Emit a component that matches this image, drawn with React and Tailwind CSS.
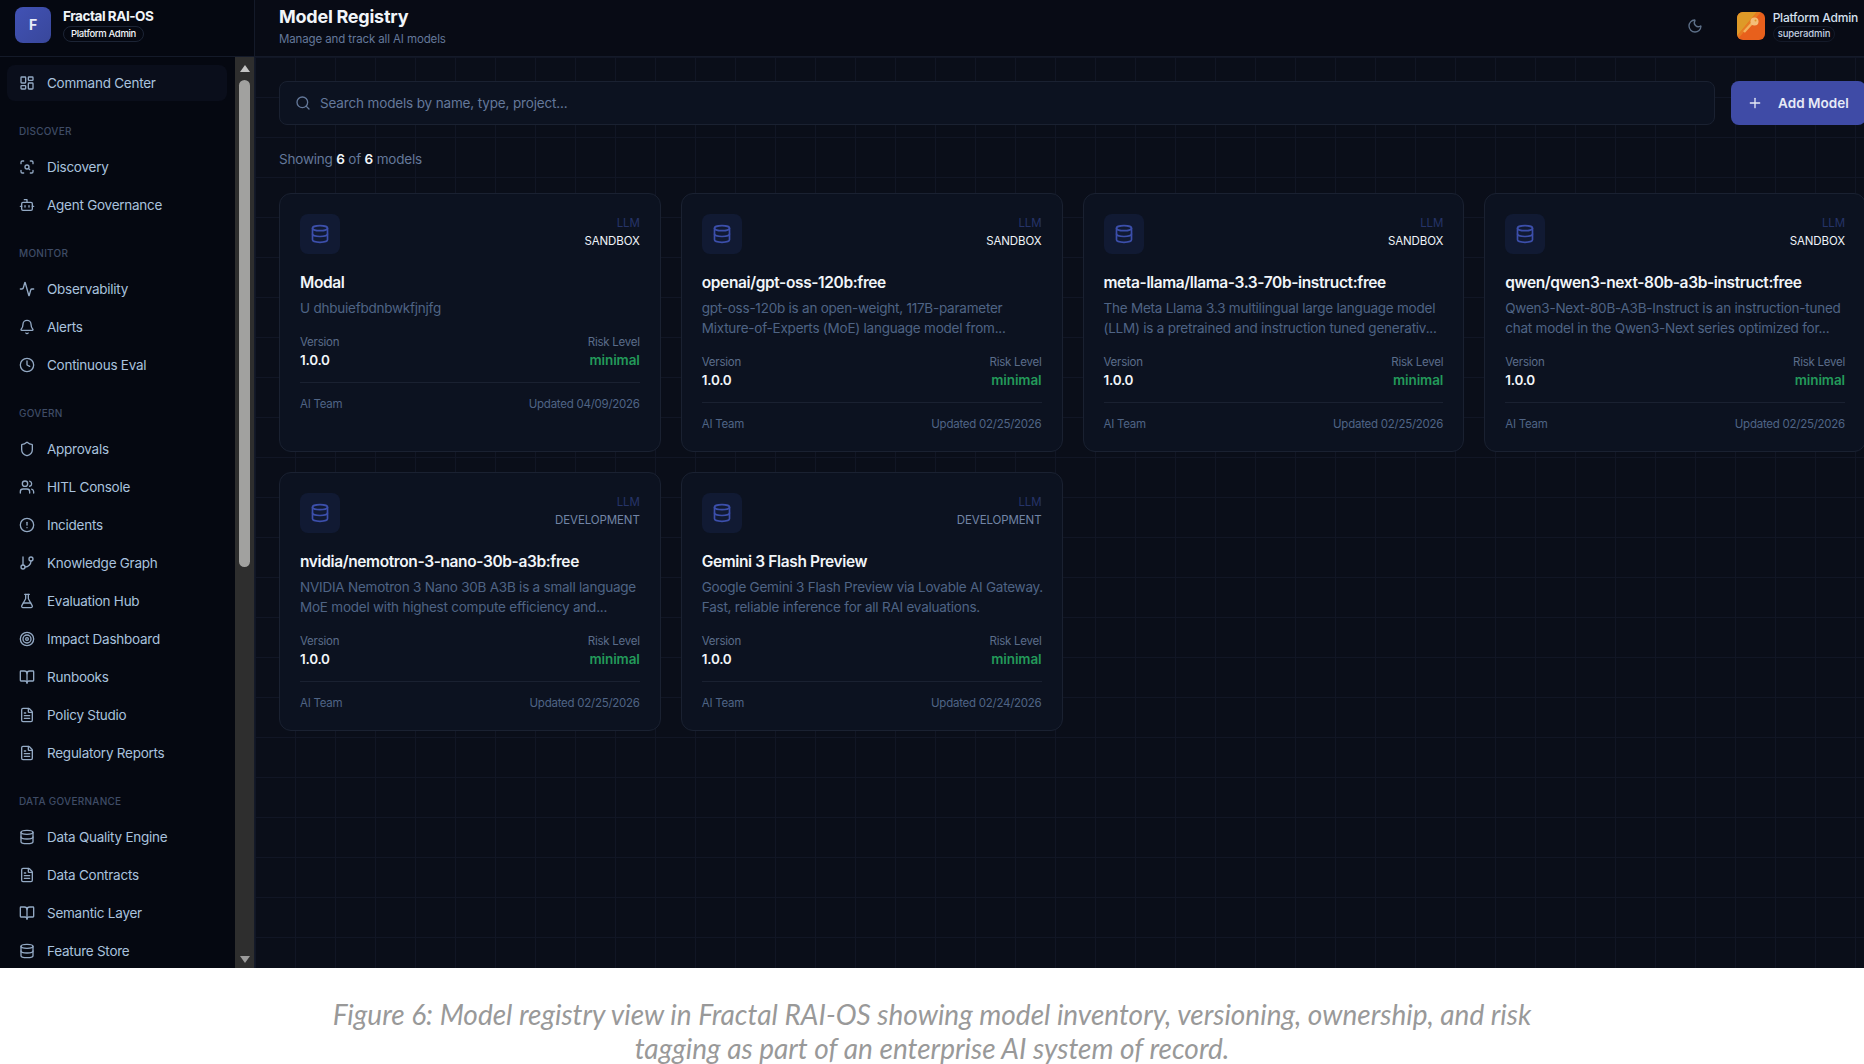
import {
  Activity,
  Bell,
  BookOpen,
  Bot,
  CircleAlert,
  Clock,
  Database,
  FileText,
  FlaskConical,
  GitBranch,
  LayoutDashboard,
  Moon,
  Plus,
  ScanSearch,
  Search,
  Shield,
  Target,
  Users,
} from "lucide-react";

const navGroups = [
  { label: null, items: [{ name: "Command Center", icon: LayoutDashboard, active: true }] },
  {
    label: "Discover",
    items: [
      { name: "Discovery", icon: ScanSearch },
      { name: "Agent Governance", icon: Bot },
    ],
  },
  {
    label: "Monitor",
    items: [
      { name: "Observability", icon: Activity },
      { name: "Alerts", icon: Bell },
      { name: "Continuous Eval", icon: Clock },
    ],
  },
  {
    label: "Govern",
    items: [
      { name: "Approvals", icon: Shield },
      { name: "HITL Console", icon: Users },
      { name: "Incidents", icon: CircleAlert },
      { name: "Knowledge Graph", icon: GitBranch },
      { name: "Evaluation Hub", icon: FlaskConical },
      { name: "Impact Dashboard", icon: Target },
      { name: "Runbooks", icon: BookOpen },
      { name: "Policy Studio", icon: FileText },
      { name: "Regulatory Reports", icon: FileText },
    ],
  },
  {
    label: "Data Governance",
    items: [
      { name: "Data Quality Engine", icon: Database },
      { name: "Data Contracts", icon: FileText },
      { name: "Semantic Layer", icon: BookOpen },
      { name: "Feature Store", icon: Database },
    ],
  },
];

/* descriptions keep their line breaks, they are clamped to two lines in the app */
const models = [
  {
    name: "Modal",
    desc: "U dhbuiefbdnbwkfjnjfg",
    stage: "SANDBOX",
    updated: "04/09/2026",
  },
  {
    name: "openai/gpt-oss-120b:free",
    desc: "gpt-oss-120b is an open-weight, 117B-parameter\nMixture-of-Experts (MoE) language model from...",
    stage: "SANDBOX",
    updated: "02/25/2026",
  },
  {
    name: "meta-llama/llama-3.3-70b-instruct:free",
    desc: "The Meta Llama 3.3 multilingual large language model\n(LLM) is a pretrained and instruction tuned generativ...",
    stage: "SANDBOX",
    updated: "02/25/2026",
  },
  {
    name: "qwen/qwen3-next-80b-a3b-instruct:free",
    desc: "Qwen3-Next-80B-A3B-Instruct is an instruction-tuned\nchat model in the Qwen3-Next series optimized for...",
    stage: "SANDBOX",
    updated: "02/25/2026",
  },
  {
    name: "nvidia/nemotron-3-nano-30b-a3b:free",
    desc: "NVIDIA Nemotron 3 Nano 30B A3B is a small language\nMoE model with highest compute efficiency and...",
    stage: "DEVELOPMENT",
    updated: "02/25/2026",
  },
  {
    name: "Gemini 3 Flash Preview",
    desc: "Google Gemini 3 Flash Preview via Lovable AI Gateway.\nFast, reliable inference for all RAI evaluations.",
    stage: "DEVELOPMENT",
    updated: "02/24/2026",
  },
];

const SidebarScrollbar = () => (
  <div className="flex flex-col items-center w-[19px] shrink-0 bg-[#2e2e2e]">
    <div className="flex items-center justify-center h-[22px] w-full">
      <svg width="10" height="7" viewBox="0 0 10 7">
        <path d="M5 0 L10 7 L0 7 Z" fill="#c4c4c4" />
      </svg>
    </div>
    <div className="w-[11px] h-[487px] mt-px rounded-md bg-[#a1a19f]" />
    <div className="flex-1" />
    <div className="flex items-center justify-center h-[18px] w-full">
      <svg width="10" height="7" viewBox="0 0 10 7">
        <path d="M0 0 L10 0 L5 7 Z" fill="#9b9b9b" />
      </svg>
    </div>
  </div>
);

const Sidebar = () => (
  <aside className="flex flex-col w-[255px] shrink-0 border-r border-[#141a29] bg-[#050811]">
    <div className="flex items-start gap-3 h-[57px] shrink-0 pt-[7px] pl-[15px] border-b border-[#141a29]">
      <div className="flex items-center justify-center w-9 h-9 rounded-lg bg-gradient-to-br from-[#4152b5] to-[#39479b] text-sm font-bold text-[#e8ecf8]">
        F
      </div>
      <div className="flex flex-col items-start">
        <span className="text-[13.5px] leading-[18px] tracking-[-0.45px] font-bold text-[#f1f5f9]">Fractal RAI-OS</span>
        <span className="mt-px px-[7px] rounded-full border border-[#1c2435] text-[9.5px] leading-[14px] tracking-[-0.35px] font-medium text-[#f1f5f9]">
          Platform Admin
        </span>
      </div>
    </div>
    <div className="flex flex-1 min-h-0">
      <nav className="flex-1 min-w-0 overflow-hidden pt-2 pl-[7px] pr-2">
        {navGroups.map((group, i) => (
          <div key={i}>
            {group.label && (
              <div className="mt-[22px] mb-[10px] pl-3 h-4 text-[10px] leading-4 font-medium tracking-[0.26px] uppercase text-[#3f4c66]">
                {group.label}
              </div>
            )}
            <div className="flex flex-col gap-0.5">
              {group.items.map((item) => {
                const Icon = item.icon;
                return (
                  <div
                    key={item.name}
                    className={
                      item.active
                        ? "flex items-center gap-3 h-9 px-3 rounded-lg bg-[#0a0e1b] text-[13.5px] tracking-[-0.25px] text-[#a9c2de]"
                        : "flex items-center gap-3 h-9 px-3 rounded-lg text-[13.5px] tracking-[-0.25px] text-[#a9c2de]"
                    }
                  >
                    <Icon className="w-4 h-4 shrink-0 text-[#93a9c4]" />
                    <span>{item.name}</span>
                  </div>
                );
              })}
            </div>
          </div>
        ))}
      </nav>
      <SidebarScrollbar />
    </div>
  </aside>
);

const KeyAvatar = () => (
  <svg className="w-7 h-7 shrink-0" viewBox="0 0 28 28">
    <defs>
      <clipPath id="avatar-clip">
        <rect width="28" height="28" rx="6" />
      </clipPath>
    </defs>
    <g clipPath="url(#avatar-clip)">
      <rect width="28" height="28" fill="#e8601c" />
      <path d="M0 0 H20 L0 24 Z" fill="#de9a28" />
      <path d="M20 0 H24 L0 28 V24 Z" fill="#e67c22" />
      <path d="M18 8 L7 20" stroke="#f2b25c" strokeWidth="2.5" />
      <circle cx="17.5" cy="9.5" r="4" fill="#f4bd78" />
      <circle cx="18.5" cy="8.5" r="1" fill="#de9a28" />
    </g>
  </svg>
);

const Header = () => (
  <header className="flex items-start justify-between h-[57px] shrink-0 pl-6 pr-[6px] border-b border-[#141a29] bg-[#080b15]">
    <div className="pt-[5px]">
      <h1 className="text-lg leading-6 tracking-[-0.25px] font-bold text-[#f1f5f9]">Model Registry</h1>
      <p className="mt-0.5 text-[11.5px] leading-4 tracking-[-0.12px] text-[#64789a]">Manage and track all AI models</p>
    </div>
    <div className="flex items-center pt-[10px]">
      <Moon className="w-4 h-4 mr-[34px] text-[#5d7089]" />
      <KeyAvatar />
      <div className="ml-2 flex flex-col items-start">
        <span className="text-xs leading-4 tracking-[-0.2px] font-medium text-[#d5e0ee]">Platform Admin</span>
        <span className="px-1 rounded-full border border-[#141a29] text-[9.5px] leading-[14px] tracking-[-0.1px] font-medium text-[#c4d1e2]">
          superadmin
        </span>
      </div>
    </div>
  </header>
);

const ModelCard = ({ model }) => (
  <div className="flex flex-col px-5 pt-5 pb-[19px] rounded-xl border border-[#1a2131] bg-[#0c1220]">
    <div className="flex justify-between">
      <div className="flex items-center justify-center w-10 h-10 rounded-lg bg-[#111a33]">
        <Database className="w-5 h-5 text-[#3c4fab]" />
      </div>
      <div className="flex flex-col items-end text-[11.5px] leading-[18px] tracking-[-0.1px]">
        <span className="text-[#263468]">LLM</span>
        <span className={model.stage === "SANDBOX" ? "text-[#eef2f8]" : "text-[#7285a6]"}>{model.stage}</span>
      </div>
    </div>
    <h3 className="mt-[17px] text-[15.5px] leading-6 tracking-[-0.38px] font-semibold text-[#f1f5f9] whitespace-nowrap">
      {model.name}
    </h3>
    <p className="mt-[3px] mb-4 text-[13.5px] leading-5 tracking-[-0.23px] text-[#4f6485] whitespace-pre">{model.desc}</p>
    <div className="flex justify-between pb-3 border-b border-[#1a2131]">
      <div>
        <div className="text-[11.5px] leading-4 tracking-[-0.25px] text-[#5b6d8a]">Version</div>
        <div className="text-[13.5px] leading-5 tracking-[-0.25px] font-semibold text-[#f1f5f9]">1.0.0</div>
      </div>
      <div className="text-right">
        <div className="text-[11.5px] leading-4 tracking-[-0.25px] text-[#5b6d8a]">Risk Level</div>
        <div className="text-[13.5px] leading-5 tracking-[-0.1px] font-semibold text-[#239a5a]">minimal</div>
      </div>
    </div>
    <div className="flex justify-between pt-[13px] text-[11.5px] leading-4 tracking-[-0.25px] text-[#4f6485]">
      <span>AI Team</span>
      <span>Updated {model.updated}</span>
    </div>
  </div>
);

const App = () => (
  <div className="w-[1864px] h-[1064px] overflow-hidden bg-white font-['Inter',sans-serif]">
    <div className="flex h-[968px]">
      <Sidebar />
      <main className="flex flex-col flex-1 min-w-0 overflow-hidden">
        <Header />
        <div className="flex-1 pt-6 pl-6 bg-[#0a0e19] bg-[linear-gradient(#111625_1px,transparent_1px),linear-gradient(90deg,#111625_1px,transparent_1px)] bg-[size:40px_40px]">
          <div className="w-[1587px]">
            <div className="flex gap-4">
              <div className="flex flex-1 items-center gap-[9px] h-11 pl-[15px] pr-4 rounded-lg border border-[#1a2131] bg-[#0c1220]">
                <Search className="w-4 h-4 text-[#64789a]" />
                <span className="pt-px text-[13.5px] tracking-[-0.15px] text-[#64789a]">
                  Search models by name, type, project...
                </span>
              </div>
              <button className="flex items-center gap-[15px] h-11 w-[135px] px-4 rounded-lg bg-[#3f4ba6] text-[13.5px] tracking-[0.05px] font-semibold text-[#e6eaf6] whitespace-nowrap">
                <Plus className="w-4 h-4 shrink-0" />
                Add Model
              </button>
            </div>
            <p className="mt-6 text-[13.5px] leading-5 tracking-[-0.2px] text-[#64789a]">
              Showing <span className="font-semibold text-[#f1f5f9]">6</span> of{" "}
              <span className="font-semibold text-[#f1f5f9]">6</span> models
            </p>
            <div className="grid grid-cols-4 gap-5 mt-6">
              {models.map((model) => (
                <ModelCard key={model.name} model={model} />
              ))}
            </div>
          </div>
        </div>
      </main>
    </div>
    <p className="pt-[29px] text-center font-['Lato',sans-serif] italic text-[28px] leading-[34px] text-[#999999]">
      Figure 6: Model registry view in Fractal RAI-OS showing model inventory, versioning, ownership, and risk
      <br />
      tagging as part of an enterprise AI system of record.
    </p>
  </div>
);

export default App;
